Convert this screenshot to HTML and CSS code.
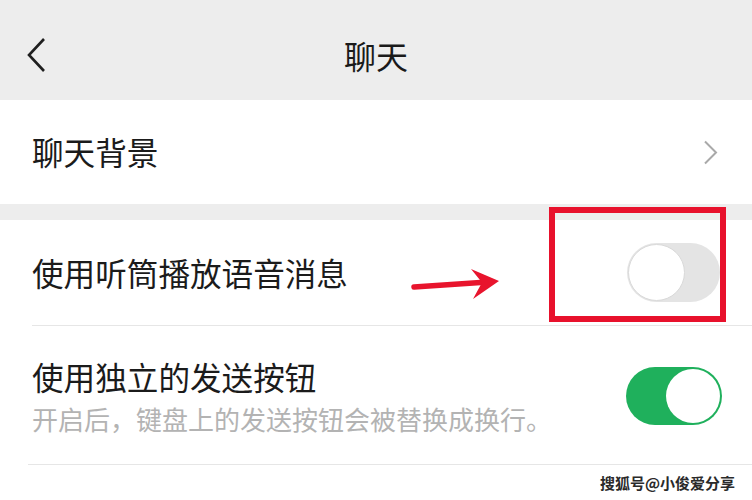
FILE: index.html
```html
<!DOCTYPE html>
<html lang="zh">
<head>
<meta charset="utf-8">
<link rel="stylesheet" href="styles.css">
</head>
<body>
<div class="page">
  <header class="topbar">
    <span class="back">
      <svg width="20" height="34" viewBox="0 0 20 34"><polyline points="17,1 2,17 17,33" fill="none" stroke="#1f1f1f" stroke-width="2.6" stroke-linejoin="miter"/></svg>
    </span>
    <h1 class="title">聊天</h1>
    <span></span>
  </header>

  <section class="group">
    <div class="row row-link">
      <span class="label">聊天背景</span>
      <svg class="chev" width="15" height="25" viewBox="0 0 15 25"><polyline points="2,1.5 13,12.5 2,23.5" fill="none" stroke="#a9a9a9" stroke-width="2"/></svg>
    </div>
  </section>

  <div class="gap"></div>

  <section class="group">
    <div class="row row-a">
      <span class="label">使用听筒播放语音消息</span>
      <span class="switch off"><span class="knob"></span></span>
    </div>
    <div class="divider"></div>
    <div class="row row-b">
      <div class="texts">
        <span class="label">使用独立的发送按钮</span>
        <span class="desc">开启后，键盘上的发送按钮会被替换成换行。</span>
      </div>
      <span class="switch on"><span class="knob"></span></span>
    </div>
    <div class="divider div2"></div>
  </section>

  <div class="highlight"></div>
  <svg class="arrow" width="110" height="45" viewBox="0 0 110 45">
    <line x1="14" y1="27" x2="88" y2="22" stroke="#e8142d" stroke-width="5.5" stroke-linecap="round"/>
    <polygon points="99,21 71,9 82,22.5 73,39" fill="#e8142d"/>
  </svg>

  <div class="watermark">搜狐号@小俊爱分享</div>
</div>
</body>
</html>
```

FILE: styles.css
```css
* { box-sizing: border-box; margin: 0; padding: 0; }
html, body { background: #ffffff; }
body {
  width: 752px;
  height: 500px;
  overflow: hidden;
  font-family: "Noto Sans CJK SC", "Noto Sans", sans-serif;
  color: #1b1b1b;
}
.page { position: relative; width: 752px; height: 500px; background: #fff; }

.topbar {
  height: 100px;
  background: #ededed;
  display: grid;
  grid-template-columns: 1fr auto 1fr;
  align-items: center;
  padding: 10px 27px 0 27px;
}
.back { display: flex; align-items: center; }
.title {
  font-size: 32px;
  font-weight: 400;
  line-height: 1.2;
  color: #1a1a1a;
}

.group { background: #fff; }

.row {
  display: flex;
  align-items: center;
  justify-content: space-between;
  padding: 0 30px 0 32px;
}
.row-link { height: 104px; padding-right: 34px; }
.label { font-size: 31.6px; line-height: 1.2; color: #1b1b1b; }
.chev { display: block; }

.gap { height: 16px; background: #ededed; }

.row-a { height: 105px; padding-right: 32px; }
.row-b { height: 138px; padding-top: 2px; }

.texts { display: flex; flex-direction: column; gap: 7px; }
.desc { font-size: 26px; line-height: 1.2; color: #b3b3b3; }

.divider { height: 1px; background: #e6e6e6; margin-left: 32px; }
.div2 { margin-left: 28px; }

.switch {
  display: flex;
  align-items: center;
  border-radius: 30px;
}
.switch.off {
  width: 93px; height: 59px;
  background: #e4e4e4;
  justify-content: flex-start;
}
.switch.off .knob {
  width: 57px; height: 57px;
  margin-left: 1px;
  border-radius: 50%;
  background: #fff;
  border: 1.5px solid #d9d9d9;
}
.switch.on {
  width: 96px; height: 58px;
  background: #1fb05c;
  justify-content: flex-end;
}
.switch.on .knob {
  width: 54px; height: 54px;
  margin-right: 2px;
  border-radius: 50%;
  background: #fff;
}

.highlight {
  position: absolute;
  left: 549px; top: 207px;
  width: 177px; height: 115px;
  border: 6px solid #e8112c;
}
.arrow { position: absolute; left: 400px; top: 260px; }

.watermark {
  position: absolute;
  right: 17px; top: 475px;
  font-size: 15px;
  font-weight: 700;
  line-height: 1;
  color: #2a2a2a;
  text-shadow: 0 0 2px #fff, 0 0 2px #fff;
}
```
